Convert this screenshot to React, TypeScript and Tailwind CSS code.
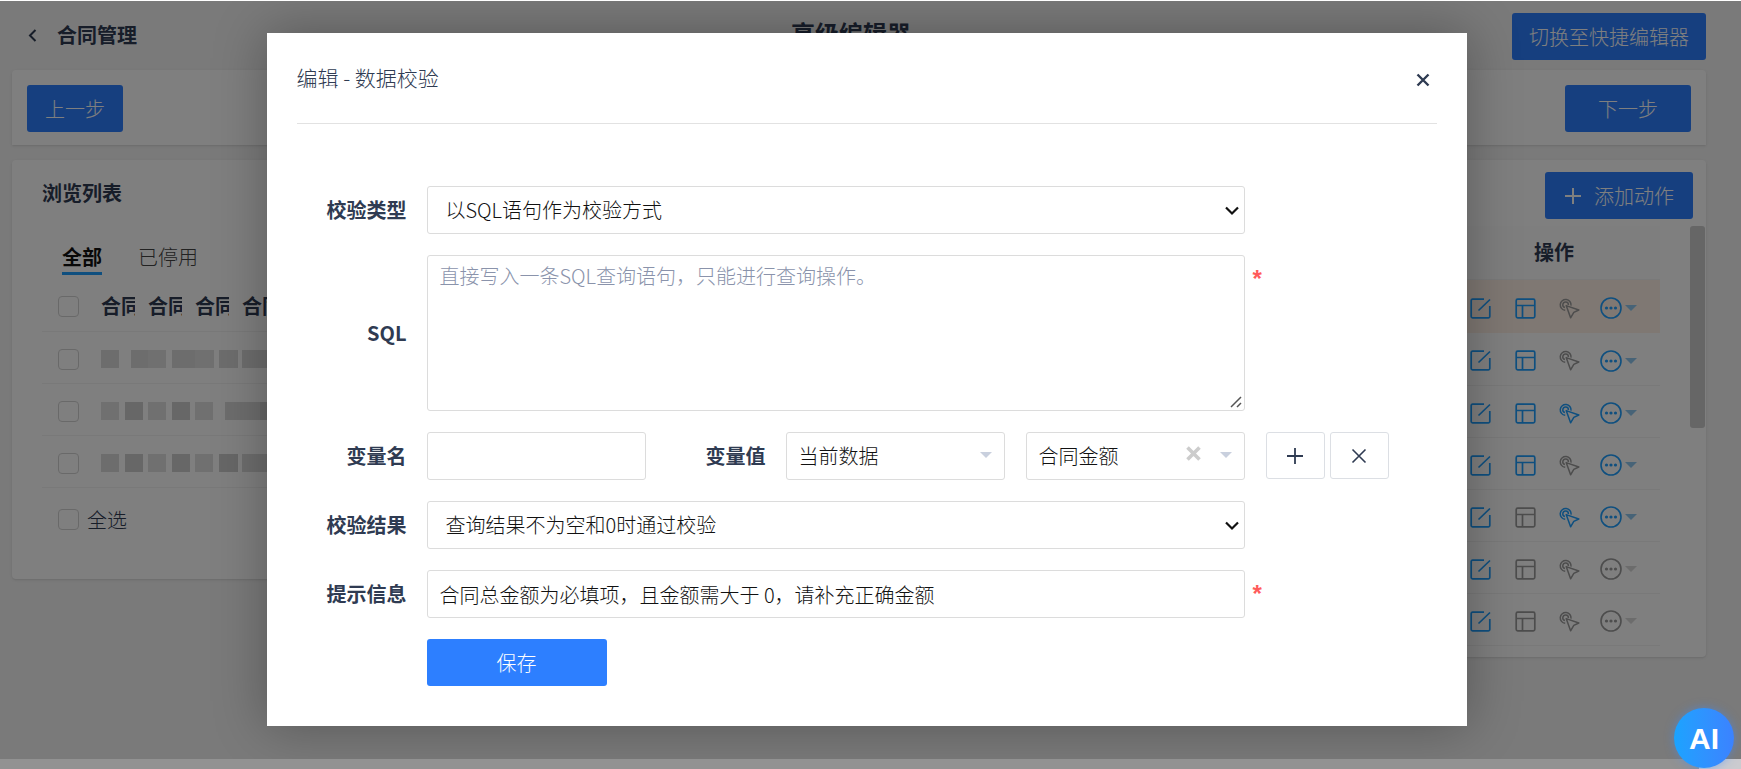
import { useState } from "react";
import type { ReactNode } from "react";

const BLUE = "text-[#1e9fff]";
const GREY = "text-[#9a9a9a]";

// one entry per action row: which of the row's icons are switched on
const actions = [
  { layout: true, click: false, more: true },
  { layout: true, click: false, more: true },
  { layout: true, click: true, more: true },
  { layout: true, click: false, more: true },
  { layout: false, click: true, more: true },
  { layout: false, click: false, more: false },
  { layout: false, click: false, more: false },
];

// masked cell values, as [gap before, width, shade]
const masks: [number, number, number][][] = [
  [[0, 18, 0], [12, 17, 0], [0, 18, 1], [6, 23, 0], [0, 19, 1], [5, 19, 0], [4, 34, 0]],
  [[0, 18, 1], [6, 18, 2], [5, 18, 1], [6, 18, 2], [5, 18, 1], [12, 35, 0], [0, 20, 2]],
  [[0, 18, 0], [6, 18, 2], [5, 18, 1], [6, 18, 2], [5, 18, 1], [6, 19, 2], [4, 34, 0]],
];
const shades = ["bg-[#dadada]", "bg-[#e0e0e0]", "bg-[#cfcfcf]"];

function EditIcon() {
  return (
    <svg width="21" height="21" viewBox="0 0 21 21" fill="none" stroke="currentColor" strokeWidth="1.7">
      <path d="M14 1.2H2.5a1.3 1.3 0 0 0-1.3 1.3v16a1.3 1.3 0 0 0 1.3 1.3h16a1.3 1.3 0 0 0 1.3-1.3V8" />
      <path d="M8.5 12.5 20 1.5" />
    </svg>
  );
}

function LayoutIcon() {
  return (
    <svg width="21" height="21" viewBox="0 0 21 21" fill="none" stroke="currentColor" strokeWidth="1.7">
      <rect x="1.2" y="1.2" width="18.6" height="18.6" rx="1.5" />
      <path d="M1.2 7.5h18.6M7.5 7.5v12.3" />
    </svg>
  );
}

function ClickIcon() {
  return (
    <svg width="21" height="21" viewBox="0 0 21 21" fill="none" stroke="currentColor" strokeWidth="1.5" strokeLinejoin="round">
      <path d="M6.2 12.3A5.4 5.4 0 1 1 12 7.6" />
      <path d="M5.9 9.6A2.8 2.8 0 1 1 9.4 6.9" />
      <path d="M7.2 7.6 19.8 12l-5 2.4-3.2 5.4Z" />
    </svg>
  );
}

function MoreIcon() {
  return (
    <svg width="22" height="22" viewBox="0 0 22 22" fill="none" stroke="currentColor" strokeWidth="1.6">
      <circle cx="11" cy="11" r="10" />
      <g fill="currentColor" stroke="none">
        <circle cx="6.5" cy="11" r="1.6" />
        <circle cx="11" cy="11" r="1.6" />
        <circle cx="15.5" cy="11" r="1.6" />
      </g>
    </svg>
  );
}

function Caret({ className = "" }: { className?: string }) {
  return (
    <svg width="12" height="6" viewBox="0 0 12 6" fill="currentColor" className={className}>
      <path d="M0 0h12L6 6Z" />
    </svg>
  );
}

function PrimaryButton({ className, children }: { className: string; children: ReactNode }) {
  return (
    <button type="button" className={`flex h-[47px] items-center justify-center rounded-[3px] bg-[#2d7fff] text-white ${className}`}>
      {children}
    </button>
  );
}

function Checkbox({ label }: { label: string }) {
  return (
    <input
      type="checkbox"
      aria-label={label}
      className="size-[21px] shrink-0 appearance-none rounded-[4px] border border-[#d2d2d2] bg-white"
    />
  );
}

function Row({ label, htmlFor, extra, children }: { label: string; htmlFor: string; extra?: ReactNode; children: ReactNode }) {
  return (
    <div className="flex">
      <label htmlFor={htmlFor} className="flex w-[130px] shrink-0 items-center justify-end pr-5 font-bold text-[#2f3b52]">
        {label}
      </label>
      <div className="relative flex min-w-0 flex-1">{children}</div>
      <div className="flex w-[192px] shrink-0">{extra}</div>
    </div>
  );
}

function Star() {
  return <span className="pt-2 pl-2 font-['Liberation_Sans',sans-serif] text-2xl font-bold text-[#ff5b5b]">*</span>;
}

function NativeSelect({ id, text }: { id: string; text: string }) {
  return (
    <>
      <select id={id} className="h-12 w-full appearance-none rounded-[3px] border border-[#dcdcdc] bg-white pr-10 pl-[18px] text-[#111]">
        <option>{text}</option>
      </select>
      <svg width="14" height="10" viewBox="0 0 14 10" fill="none" stroke="#111" strokeWidth="2.2" className="pointer-events-none absolute top-5 right-[6px]">
        <path d="m1 1.5 6 6 6-6" />
      </svg>
    </>
  );
}

function PickSelect({ label, text, clearable }: { label: string; text: string; clearable?: boolean }) {
  return (
    <div className="relative min-w-0 flex-1">
      <select aria-label={label} className="h-12 w-full appearance-none rounded-[3px] border border-[#dcdcdc] bg-white pr-10 pl-3 text-[#111]">
        <option>{text}</option>
      </select>
      {clearable && (
        <button type="button" aria-label="清除" className="absolute top-[14px] right-[44px] text-[#cccccc]">
          <svg width="15" height="15" viewBox="0 0 15 15" stroke="currentColor" strokeWidth="3.6">
            <path d="m1.5 1.5 12 12M13.5 1.5l-12 12" />
          </svg>
        </button>
      )}
      <Caret className="pointer-events-none absolute top-5 right-[13px] text-[#c9d0de]" />
    </div>
  );
}

function BrowseList() {
  return (
    <section className="h-[419px] w-1/2 rounded-[4px] bg-white pt-[19px] pl-[30px] shadow-sm">
      <h2 className="leading-7 font-bold">浏览列表</h2>
      <nav className="mt-[35px] flex gap-9 pl-5 leading-[30px]">
        <a href="#all" className="h-[33px] border-b-[3px] border-[#1e9fff] font-bold text-[#111]">全部</a>
        <a href="#stopped" className="text-[#444]">已停用</a>
      </nav>
      <table className="mt-[3px] w-full">
        <thead>
          <tr className="h-[53px] border-b border-[#f2f2f2]">
            <th className="w-[59px] pt-1 pl-4 text-left align-middle">
              <div className="flex"><Checkbox label="选择全部" /></div>
            </th>
            <th className="pt-1 text-left">
              <div className="flex gap-[13px]">
                {[0, 1, 2, 3, 4].map((i) => (
                  <span key={i} className="w-[34px] overflow-hidden leading-7 whitespace-nowrap">合同</span>
                ))}
              </div>
            </th>
          </tr>
        </thead>
        <tbody>
          {masks.map((cells, i) => (
            <tr key={i} className="h-[52px] border-b border-[#f2f2f2]">
              <td className="pt-1 pl-4">
                <div className="flex"><Checkbox label={`选择第${i + 1}行`} /></div>
              </td>
              <td className="pt-1">
                <div className="flex">
                  {cells.map(([gap, width, shade], j) => (
                    <span key={j} className={`h-[18px] ${shades[shade]}`} style={{ marginLeft: gap, width }} />
                  ))}
                </div>
              </td>
            </tr>
          ))}
        </tbody>
      </table>
      <label className="mt-[18px] flex items-center gap-2 pl-4 leading-7">
        <Checkbox label="全选" />
        全选
      </label>
    </section>
  );
}

function ActionPanel() {
  return (
    <section className="flex h-[497px] w-1/2 flex-col rounded-r-[4px] bg-white pt-3 shadow-sm">
      <PrimaryButton className="mr-[13px] w-[148px] gap-3 self-end">
        <svg width="18" height="18" viewBox="0 0 18 18" stroke="currentColor" strokeWidth="2">
          <path d="M9 1v16M1 9h16" />
        </svg>
        添加动作
      </PrimaryButton>
      <div className="mt-[7px] flex justify-end">
        <table className="mr-[30px] w-[260px]">
          <thead>
            <tr className="h-[53px] border-b border-[#f2f2f2] bg-[#fdfdfd]">
              <th className="pl-12 leading-7 font-bold">操作</th>
            </tr>
          </thead>
          <tbody>
            {actions.map((a, i) => (
              <tr key={i} className={i === 0 ? "h-[54px] bg-[#fff0e6]" : "h-[52px] border-b border-[#f2f2f2]"}>
                <td className="pt-1">
                  <div className="flex items-center justify-end pr-[23px]">
                    <button type="button" aria-label="编辑" className={`mr-6 ${BLUE}`}><EditIcon /></button>
                    <button type="button" aria-label="布局" className={`mr-[23px] ${a.layout ? BLUE : GREY}`}><LayoutIcon /></button>
                    <button type="button" aria-label="触发" className={`mr-5 ${a.click ? BLUE : GREY}`}><ClickIcon /></button>
                    <button type="button" aria-label="更多" className={`flex items-center gap-[3px] ${a.more ? BLUE : GREY}`}>
                      <MoreIcon />
                      <Caret className={a.more ? "text-[#8fc7ef]" : "text-[#d8d8d8]"} />
                    </button>
                  </div>
                </td>
              </tr>
            ))}
          </tbody>
        </table>
        <div className="mr-px h-[202px] w-[15px] rounded-[3px] bg-[#cccccc]" />
      </div>
    </section>
  );
}

function EditDialog() {
  const [message, setMessage] = useState("合同总金额为必填项，且金额需大于 0，请补充正确金额");
  return (
    <div role="dialog" aria-labelledby="dialog-title" className="w-full max-w-[1200px] bg-white px-[30px] pb-10 shadow-[0_0_50px_rgba(0,0,0,0.3)]">
      <header className="flex h-[91px] items-center justify-between border-b border-[#e2e2e2]">
        <h2 id="dialog-title" className="text-[21px] text-[#2f3b52]">编辑 - 数据校验</h2>
        <button type="button" aria-label="关闭" className="mr-[7px] pt-1 text-[#2f3b52]">
          <svg width="14" height="14" viewBox="0 0 14 14" stroke="currentColor" strokeWidth="2.4">
            <path d="m1.5 1.5 11 11M12.5 1.5l-11 11" />
          </svg>
        </button>
      </header>
      <form className="flex flex-col gap-[21px] pt-[62px]">
        <Row label="校验类型" htmlFor="check-type">
          <NativeSelect id="check-type" text="以SQL语句作为校验方式" />
        </Row>
        <Row label="SQL" htmlFor="sql" extra={<Star />}>
          <textarea
            id="sql"
            placeholder="直接写入一条SQL查询语句，只能进行查询操作。"
            className="block h-[156px] w-full rounded-[3px] border border-[#dcdcdc] px-3 py-[6px] leading-7 placeholder:text-[#8a93ab]"
          />
          <svg width="14" height="14" viewBox="0 0 14 14" stroke="#555" strokeWidth="1.5" className="pointer-events-none absolute right-[2px] bottom-[2px] bg-white">
            <path d="M2 12 12 2M8 12l4-4" />
          </svg>
        </Row>
        <Row
          label="变量名"
          htmlFor="var-name"
          extra={
            <div className="flex gap-[5px] pl-[21px] text-[#2f3b52]">
              <button type="button" aria-label="添加变量" className="flex h-[47px] w-[59px] items-center justify-center rounded-[3px] border border-[#dcdfe4]">
                <svg width="18" height="18" viewBox="0 0 18 18" stroke="currentColor" strokeWidth="1.8">
                  <path d="M9 1v16M1 9h16" />
                </svg>
              </button>
              <button type="button" aria-label="删除变量" className="flex h-[47px] w-[59px] items-center justify-center rounded-[3px] border border-[#dcdfe4]">
                <svg width="16" height="16" viewBox="0 0 16 16" stroke="currentColor" strokeWidth="1.6">
                  <path d="m1.5 1.5 13 13M14.5 1.5l-13 13" />
                </svg>
              </button>
            </div>
          }
        >
          <div className="min-w-0 flex-1">
            <input id="var-name" type="text" className="h-12 w-full rounded-[3px] border border-[#dcdcdc] px-3 text-[#111]" />
          </div>
          <span className="flex w-[140px] items-center justify-end pr-5 font-bold text-[#2f3b52]">变量值</span>
          <PickSelect label="变量来源" text="当前数据" />
          <div className="w-[21px]" />
          <PickSelect label="变量值" text="合同金额" clearable />
        </Row>
        <Row label="校验结果" htmlFor="check-result">
          <NativeSelect id="check-result" text="查询结果不为空和0时通过校验" />
        </Row>
        <Row label="提示信息" htmlFor="message" extra={<Star />}>
          <input
            id="message"
            type="text"
            value={message}
            onChange={(e) => setMessage(e.target.value)}
            className="h-12 w-full rounded-[3px] border border-[#dcdcdc] px-3 text-[#111]"
          />
        </Row>
        <PrimaryButton className="ml-[130px] w-[180px]">保存</PrimaryButton>
      </form>
    </div>
  );
}

export default function App() {
  return (
    <div className="relative flex h-screen flex-col overflow-hidden bg-[#f4f4f4] font-['Noto_Sans_CJK_SC',sans-serif] text-[20px] font-light text-[#2f3b52]">
      <header className="grid h-[70px] grid-cols-3 items-start pt-[13px] pr-[35px] pl-3">
        <a href="#back" className="flex h-11 items-center gap-5 pl-4 font-bold">
          <svg width="9" height="13" viewBox="0 0 9 13" fill="none" stroke="currentColor" strokeWidth="2">
            <path d="M7.5 1 2 6.5 7.5 12" />
          </svg>
          合同管理
        </a>
        <h1 className="pr-4 text-center text-2xl leading-10 font-bold">高级编辑器</h1>
        <PrimaryButton className="w-[194px] justify-self-end">切换至快捷编辑器</PrimaryButton>
      </header>
      <main className="flex-1 pr-[35px] pl-3">
        <div className="flex h-[75px] items-start justify-between rounded-t-[4px] bg-white px-[15px] pt-[15px] shadow-sm">
          <PrimaryButton className="w-24">上一步</PrimaryButton>
          <PrimaryButton className="w-[126px]">下一步</PrimaryButton>
        </div>
        <div className="mt-[15px] flex items-start">
          <BrowseList />
          <ActionPanel />
        </div>
      </main>
      <div className="flex h-[10px] shrink-0 bg-[#cbcbcf]">
        <div className="mr-[42px] flex-1 bg-[#929292]" />
      </div>

      <div className="absolute inset-x-0 top-0 bottom-[10px] flex items-start justify-center overflow-hidden border-t border-white bg-black/50 bg-clip-padding pt-8 pr-2">
        <EditDialog />
      </div>
      <button
        type="button"
        className="absolute right-[7px] bottom-px size-[60px] rounded-full bg-linear-to-r from-[#1aa3ff] to-[#3b82ff] font-['Liberation_Sans',sans-serif] text-[30px] font-bold text-white shadow-[0_0_10px_rgba(60,140,255,0.5)]"
      >
        AI
      </button>
    </div>
  );
}
